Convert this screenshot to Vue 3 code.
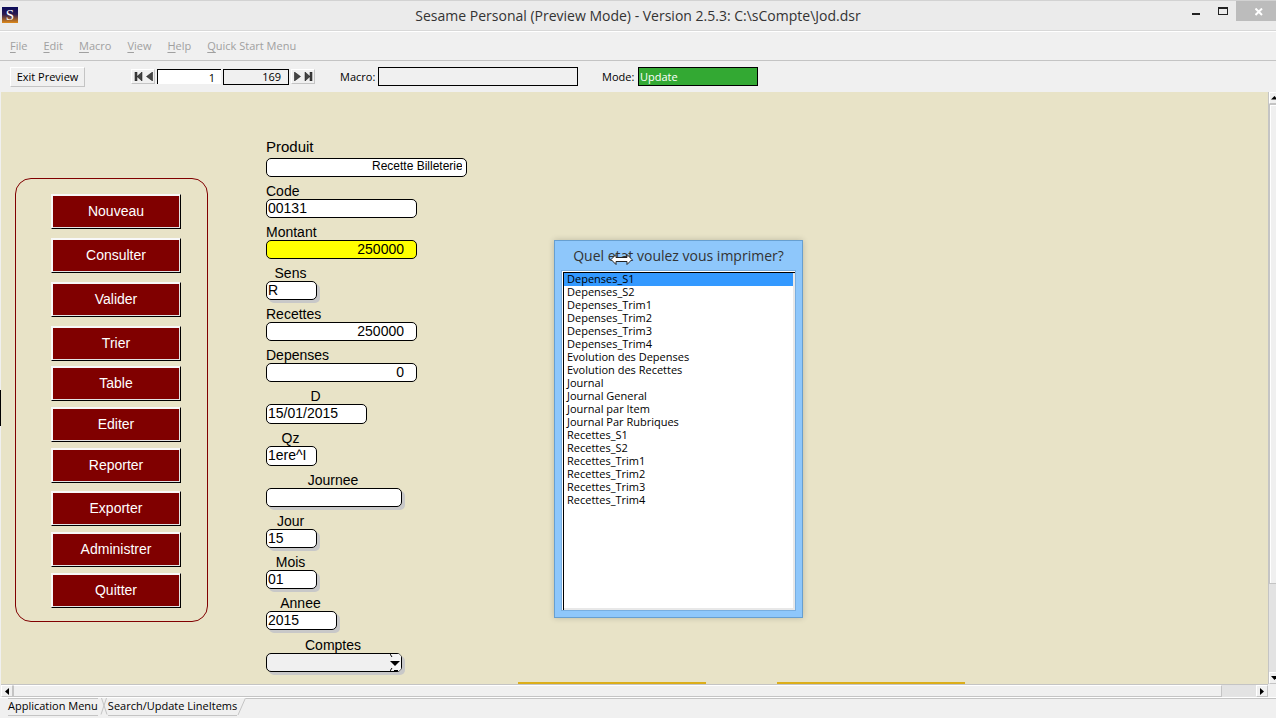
<script setup>
import { ref, reactive } from 'vue'

const menus = ['File', 'Edit', 'Macro', 'View', 'Help', 'Quick Start Menu']
const actionGroups = [
  { name: 'main', actions: ['Nouveau', 'Consulter', 'Valider', 'Trier'] },
  { name: 'data', actions: ['Table', 'Editer', 'Reporter'] },
  { name: 'system', actions: ['Exporter', 'Administrer', 'Quitter'] }
]

const fields = reactive([
  { id: 'produit', label: 'Produit', value: 'Recette Billeterie', kind: 'product', size: 'xl' },
  { id: 'code', label: 'Code', value: '00131', size: 'l' },
  { id: 'montant', label: 'Montant', value: '250000', kind: 'amount accent', size: 'l' },
  { id: 'sens', label: 'Sens', value: 'R', kind: 'centred raised', size: 's' },
  { id: 'recettes', label: 'Recettes', value: '250000', kind: 'amount', size: 'l' },
  { id: 'depenses', label: 'Depenses', value: '0', kind: 'amount', size: 'l' },
  { id: 'date', label: 'D', value: '15/01/2015', kind: 'centred tall', size: 'm' },
  { id: 'quinzaine', label: 'Qz', value: '1ere^I', kind: 'centred tall', size: 's' },
  { id: 'journee', label: 'Journee', value: '', kind: 'centred raised', size: 'ml' },
  { id: 'jour', label: 'Jour', value: '15', kind: 'centred raised', size: 's' },
  { id: 'mois', label: 'Mois', value: '01', kind: 'centred raised', size: 's' },
  { id: 'annee', label: 'Annee', value: '2015', kind: 'centred raised', size: 'sm' }
])

const reports = [
  'Depenses_S1', 'Depenses_S2', 'Depenses_Trim1', 'Depenses_Trim2', 'Depenses_Trim3',
  'Depenses_Trim4', 'Evolution des Depenses', 'Evolution des Recettes', 'Journal',
  'Journal General', 'Journal par Item', 'Journal Par Rubriques', 'Recettes_S1',
  'Recettes_S2', 'Recettes_Trim1', 'Recettes_Trim2', 'Recettes_Trim3', 'Recettes_Trim4'
]
const report = ref('Depenses_S1')
const record = ref('1')
const compte = ref('')
</script>

<template>
  <div class="window">
    <header class="titlebar">
      <span class="logo">S</span>
      <h1>Sesame Personal (Preview Mode) - Version 2.5.3: C:\sCompte\Jod.dsr</h1>
      <div class="controls">
        <button type="button" class="ctl" aria-label="Minimize">
          <svg width="12" height="10"><path d="M2 7h8v2H2z" fill="#222" /></svg>
        </button>
        <button type="button" class="ctl" aria-label="Maximize">
          <svg width="12" height="10"><path d="M1 1h10v8H1zM2 3v5h8V3z" fill="#222" fill-rule="evenodd" /></svg>
        </button>
        <button type="button" class="ctl close" aria-label="Close">
          <svg width="8" height="8"><path d="M0.5 0.5L7 7M7 0.5L0.5 7" stroke="#fff" stroke-width="2" /></svg>
        </button>
      </div>
    </header>

    <nav class="menubar">
      <button v-for="m in menus" :key="m" type="button"><u>{{ m[0] }}</u>{{ m.slice(1) }}</button>
    </nav>

    <div class="toolbar">
      <button type="button" class="exit">Exit Preview</button>
      <div class="pager">
        <div class="arrows">
          <button type="button" aria-label="First record">
            <svg width="9" height="9"><path d="M1 0h2v9H1zM8 0v9L3 4.500z" fill="#444" stroke="#111" stroke-width=".5" /></svg>
          </button>
          <button type="button" aria-label="Previous record">
            <svg width="7" height="9"><path d="M6.500 0v9L0.500 4.500z" fill="#444" stroke="#111" stroke-width=".5" /></svg>
          </button>
        </div>
        <input v-model="record" class="record" aria-label="Record" />
        <output class="total">169</output>
        <div class="arrows">
          <button type="button" aria-label="Next record">
            <svg width="7" height="9"><path d="M0.500 0v9L6.500 4.500z" fill="#444" stroke="#111" stroke-width=".5" /></svg>
          </button>
          <button type="button" aria-label="Last record">
            <svg width="9" height="9"><path d="M6 0h2v9H6zM1 0v9L6 4.500z" fill="#444" stroke="#111" stroke-width=".5" /></svg>
          </button>
        </div>
      </div>
      <label class="status macro">Macro: <input readonly /></label>
      <label class="status mode">Mode: <input readonly value="Update" /></label>
    </div>

    <div class="workspace">
      <main class="canvas">
        <aside class="panel">
          <div v-for="g in actionGroups" :key="g.name" class="group" :class="g.name">
            <button v-for="a in g.actions" :key="a" type="button">{{ a }}</button>
          </div>
        </aside>

        <form class="form" @submit.prevent>
          <div v-for="f in fields" :key="f.id" class="field" :class="[f.kind, f.size]">
            <label :for="f.id">{{ f.label }}</label>
            <input :id="f.id" v-model="f.value" />
          </div>
          <div class="field centred raised ml combo">
            <label for="comptes">Comptes</label>
            <div class="pick">
              <select id="comptes" v-model="compte"><option value=""></option></select>
              <svg class="drop" width="11" height="17"><path d="M0 0h9l2 2v13l-2 2H0l2-3V3z" fill="#f5f5f5" /><path d="M0 7h10L5 12z" fill="#000" /><path d="M0 0l2 3M0 17l2-3M4 16.500h4" stroke="#000" /></svg>
            </div>
          </div>
        </form>

        <div class="tables">
          <div class="subtable"></div>
          <div class="subtable"></div>
        </div>

        <section class="dialog">
          <h2 id="dialog-title">Quel etat voulez vous imprimer?</h2>
          <select v-model="report" class="reports" size="18" aria-labelledby="dialog-title">
            <option v-for="r in reports" :key="r" :value="r">{{ r }}</option>
          </select>
          <svg class="cursor" width="23" height="11"><path d="M1 5.500L6 0.500V3.500H17V0.500L22 5.500L17 10.500V7.500H6V10.500z" fill="#fff" stroke="#222" /></svg>
        </section>
      </main>

      <div class="vscroll">
        <button type="button" aria-label="Scroll up"><svg width="7" height="4"><path d="M3.500 0L7 3.500H0z" /></svg></button>
        <div class="track"><div class="thumb"></div></div>
        <button type="button" aria-label="Scroll down"><svg width="7" height="4"><path d="M0 0h7L3.500 4z" /></svg></button>
      </div>
    </div>

    <div class="hscroll">
      <button type="button" aria-label="Scroll left"><svg width="4" height="7"><path d="M4 0v7L0 3.500z" /></svg></button>
      <div class="track"><div class="thumb"></div></div>
      <button type="button" aria-label="Scroll right"><svg width="4" height="7"><path d="M0 0v7L4 3.500z" /></svg></button>
    </div>

    <footer class="tabs">
      <button type="button">Application Menu</button>
      <svg width="10" height="18"><path d="M8.500 0L3 16.500M3.500 0L9 16.500" stroke="#c4c4c4" fill="none" /></svg>
      <button type="button" class="active">Search/Update LineItems</button>
      <svg width="9" height="18"><path d="M8.500 0L1 17" stroke="#c4c4c4" fill="none" /></svg>
      <span class="rest"></span>
    </footer>
  </div>
</template>

<style>
body { margin: 0; }
</style>

<style scoped>
.window {
  display: flex;
  flex-direction: column;
  min-height: 100vh;
  background: #f0f0f0;
  color: #000;
  font: 11px/14px "Open Sans", "Noto Sans", sans-serif;
}
.window *, .window *::before { box-sizing: border-box; }
button, input, select {
  margin: 0;
  padding: 0;
  border: 0;
  border-radius: 0;
  background: none;
  color: inherit;
  font: inherit;
  outline: none;
}
svg { display: block; flex: none; }

.titlebar {
  display: grid;
  grid-template-columns: 1fr auto 1fr;
  height: 31px;
  background: #ebebeb;
  border-top: 1px solid #d2d2d2;
  border-bottom: 1px solid #d8d8d8;
}
.logo {
  width: 16px;
  height: 16px;
  margin: 6px 2px;
  background: linear-gradient(#0a0a5a, #2a1a50 45%, #e08a18);
  color: #fff;
  font: 15px/16px "Liberation Serif", serif;
  text-align: center;
}
h1 {
  margin: 0;
  color: #333;
  font-size: 14px;
  font-weight: 400;
  line-height: 29px;
}
.controls {
  display: flex;
  justify-content: flex-end;
  align-items: flex-start;
}
.ctl {
  display: flex;
  justify-content: center;
  width: 27px;
  height: 20px;
  padding-top: 5px;
}
.ctl.close {
  width: 40px;
  padding: 7px 0 0 6px;
  background: #bcbcbc;
}

.menubar {
  display: flex;
  gap: 16px;
  height: 30px;
  padding-left: 10px;
  background: #f0f0f0;
  border-top: 1px solid #fff;
  border-bottom: 1px solid #c4c4c4;
  color: #a0a0a0;
}
.menubar u { text-underline-offset: 2px; }

.toolbar {
  display: flex;
  align-items: center;
  height: 31px;
  padding-left: 10px;
}
.exit {
  width: 75px;
  height: 20px;
  border: 1px solid;
  border-color: #fff #c4c4c4 #c4c4c4 #fff;
}
.pager {
  display: flex;
  align-items: center;
  gap: 2px;
  margin-left: 46px;
}
.arrows {
  display: flex;
  align-items: center;
  justify-content: space-around;
  width: 24px;
  height: 15px;
  border: 1px solid;
  border-color: #fff #c4c4c4 #c4c4c4 #fff;
}
.record, .total {
  text-align: right;
}
.record {
  width: 64px;
  height: 15px;
  padding-right: 6px;
  background: #fff;
  border-top: 1px solid #000;
  border-left: 1px solid #000;
}
.total {
  width: 66px;
  height: 16px;
  padding-right: 7px;
  border: 1px solid #000;
}
.status {
  display: flex;
  align-items: center;
  justify-content: space-between;
}
.status input {
  height: 19px;
  padding-left: 1px;
  border: 1px solid #000;
}
.macro { width: 238px; margin-left: 25px; }
.macro input { width: 200px; }
.mode { width: 156px; margin-left: 24px; }
.mode input {
  width: 120px;
  background: #33a933;
  color: #fff;
}

.workspace {
  display: flex;
  flex: 1;
}
.canvas {
  position: relative;
  display: flex;
  align-items: flex-start;
  flex: 1;
  margin-left: 1px;
  padding: 44px 0 11px 14px;
  background: #e8e3c7;
  font: 14px/16px "Liberation Sans", Arial, sans-serif;
}
.canvas::before {
  content: "";
  position: absolute;
  left: -1px;
  top: 298px;
  width: 1px;
  height: 36px;
  background: #000;
}
.panel {
  width: 193px;
  margin-top: 42px;
  padding: 15px 0 13px 35px;
  border: 1px solid #800000;
  border-radius: 16px;
}
.group {
  display: grid;
  gap: 6px;
}
.group.main { gap: 9px; }
.group.data { margin-top: 5px; }
.group.system { margin-top: 8px; }
.group button {
  width: 130px;
  height: 35px;
  padding-bottom: 2px;
  background: #800000;
  border: 1px solid;
  border-color: #f8f8f8 #000 #000 #f8f8f8;
  box-shadow: inset 1px 1px #f8f8f8, inset -1px -1px #e4e4e4;
  color: #fff;
}

.form { margin-left: 58px; }
.field label {
  display: block;
  height: 22px;
  padding-top: 6px;
  white-space: nowrap;
}
.field input, .field select {
  display: block;
  width: 100%;
  height: 19px;
  padding: 0 1px 2px;
  background: #fff;
  border: 1px solid #000;
  border-radius: 5px;
}
.s { width: 51px; }
.sm { width: 71px; }
.m { width: 101px; }
.ml { width: 136px; }
.l { width: 151px; }
.xl { width: 201px; }
.centred label { padding-right: 2px; text-align: center; }
.amount input { padding-right: 12px; text-align: right; }
.accent input { background: #ff0; }
.tall input { height: 20px; }
.raised input, .raised select { box-shadow: 3px 3px #c8c8c8; }
.product label { padding-top: 3px; font-size: 15px; }
.product input {
  padding: 0 4px 3px 105px;
  font-size: 12px;
}
.combo label { height: 23px; padding-top: 7px; }
.pick { position: relative; }
.field select {
  appearance: none;
  background: #f0f0f0;
}
.drop {
  position: absolute;
  right: 1px;
  top: 1px;
  pointer-events: none;
}

.tables {
  display: flex;
  align-self: flex-end;
  gap: 71px;
  margin: 0 0 -11px 51px;
}
.subtable {
  width: 188px;
  height: 2px;
  background: #dcae1a;
}

.dialog {
  position: absolute;
  left: 553px;
  top: 148px;
  width: 249px;
  padding: 0 6px 6px;
  background: #8ec7fb;
  border: 1px solid #679fd0;
  box-shadow: 0 0 6px #00000030;
  font-family: "Open Sans", "Noto Sans", sans-serif;
}
h2 {
  margin: 0;
  color: #333;
  font-size: 14px;
  font-weight: 400;
  line-height: 29px;
  text-align: center;
}
.reports {
  display: block;
  width: 100%;
  height: 341px;
  overflow: hidden;
  background: #fff;
  border: 1px solid #78aee0;
  box-shadow: inset 1px 1px #fff, inset 2px 2px #000, inset -2px -2px #e8e8e8;
  padding: 2px;
  font-size: 11px;
}
.reports option {
  display: flex;
  align-items: center;
  height: 13px;
  min-height: 0;
  padding: 0 3px 2px;
  line-height: 13px;
  color: #000;
}
.reports option:checked {
  background: linear-gradient(#3399ff, #3399ff);
  color: #000;
}
.cursor {
  position: absolute;
  left: 55px;
  top: 13px;
}

.vscroll {
  display: flex;
  flex-direction: column;
  width: 8px;
  overflow: hidden;
  background: #e3e3e3;
  border-left: 1px solid #c4c4c4;
}
.vscroll button {
  width: 12px;
  height: 12px;
  padding: 3px 1px;
  background: #f0f0f0;
  border: 1px solid;
  border-color: #fff #c4c4c4 #c4c4c4 #fff;
}
.vscroll .track { flex: 1; }
.vscroll .thumb {
  width: 12px;
  height: 84.5%;
  background: #f0f0f0;
  border: 1px solid #c4c4c4;
  box-shadow: inset 1px 1px #fff;
}
.hscroll {
  display: flex;
  height: 13px;
  margin: 0 8px 0 1px;
  background: #e3e3e3;
  border-top: 1px solid #c4c4c4;
}
.hscroll button {
  width: 12px;
  padding: 0 3px;
  background: #f0f0f0;
  border: 1px solid;
  border-color: #fff #c4c4c4 #c4c4c4 #fff;
}
.hscroll .track { flex: 1; }
.hscroll .thumb {
  width: 97.3%;
  height: 12px;
  background: #f0f0f0;
  border: 1px solid;
  border-color: #fff #c4c4c4 #c4c4c4 #c4c4c4;
}

.tabs {
  display: flex;
  height: 21px;
  padding-left: 8px;
  border-top: 1px solid #fff;
}
.tabs button {
  height: 18px;
  padding-bottom: 2px;
  border: 0 solid #c4c4c4;
  border-width: 1px 0;
}
.tabs .active { border-top-color: transparent; }
.rest {
  flex: 1;
  border-top: 1px solid #c4c4c4;
}
</style>
